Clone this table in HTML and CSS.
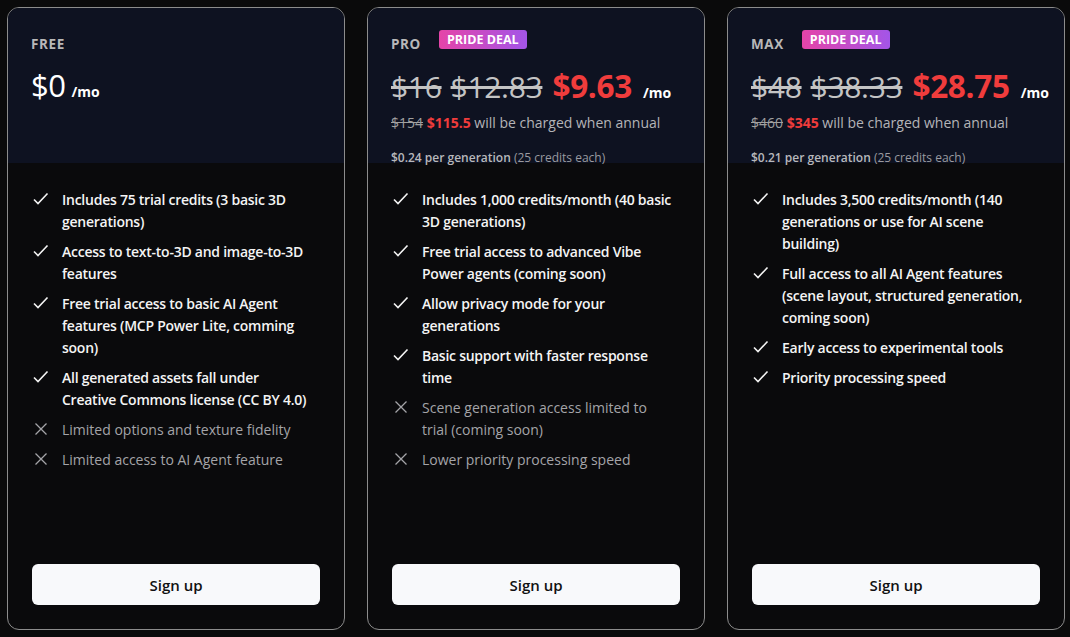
FILE: index.html
```html
<!DOCTYPE html>
<html lang="en">
<head>
    <meta charset="UTF-8">
    <meta name="viewport" content="width=device-width, initial-scale=1.0">
    <title>Pricing</title>
    <link rel="stylesheet" href="styles.css">
</head>
<body>

    <div class="plans">

        <!-- Free -->
        <div class="plan">
            <div class="plan-head">
                <div class="plan-title">
                    <span class="plan-name">FREE</span>
                </div>
                <div class="price-row free-row">
                    <span class="price-free">$0</span>
                    <span class="per">/mo</span>
                </div>
            </div>
            <div class="plan-body">
                <ul class="features">
                    <li class="yes"><svg class="icon" viewBox="0 0 16 16"><path d="M1 8.5l4 4 9.5-10"/></svg><span>Includes 75 trial credits (3 basic 3D generations)</span></li>
                    <li class="yes"><svg class="icon" viewBox="0 0 16 16"><path d="M1 8.5l4 4 9.5-10"/></svg><span>Access to text-to-3D and image-to-3D features</span></li>
                    <li class="yes"><svg class="icon" viewBox="0 0 16 16"><path d="M1 8.5l4 4 9.5-10"/></svg><span>Free trial access to basic AI Agent features (MCP Power Lite, comming soon)</span></li>
                    <li class="yes"><svg class="icon" viewBox="0 0 16 16"><path d="M1 8.5l4 4 9.5-10"/></svg><span>All generated assets fall under Creative Commons license (CC BY 4.0)</span></li>
                    <li class="no"><svg class="icon" viewBox="0 0 16 16"><path d="M2.5 2.5l11 11M13.5 2.5l-11 11"/></svg><span>Limited options and texture fidelity</span></li>
                    <li class="no"><svg class="icon" viewBox="0 0 16 16"><path d="M2.5 2.5l11 11M13.5 2.5l-11 11"/></svg><span>Limited access to AI Agent feature</span></li>
                </ul>
                <button class="signup">Sign up</button>
            </div>
        </div>

        <!-- Pro -->
        <div class="plan">
            <div class="plan-head">
                <div class="plan-title">
                    <span class="plan-name">PRO</span>
                    <span class="deal">PRIDE DEAL</span>
                </div>
                <div class="price-row">
                    <s class="old">$16</s>
                    <s class="old">$12.83</s>
                    <span class="now">$9.63</span>
                    <span class="per">/mo</span>
                </div>
                <div class="annual"><s>$154</s> <b>$115.5</b> will be charged when annual</div>
                <div class="per-gen"><b>$0.24 per generation</b> (25 credits each)</div>
            </div>
            <div class="plan-body">
                <ul class="features">
                    <li class="yes"><svg class="icon" viewBox="0 0 16 16"><path d="M1 8.5l4 4 9.5-10"/></svg><span>Includes 1,000 credits/month (40 basic 3D generations)</span></li>
                    <li class="yes"><svg class="icon" viewBox="0 0 16 16"><path d="M1 8.5l4 4 9.5-10"/></svg><span>Free trial access to advanced Vibe Power agents (coming soon)</span></li>
                    <li class="yes"><svg class="icon" viewBox="0 0 16 16"><path d="M1 8.5l4 4 9.5-10"/></svg><span>Allow privacy mode for your generations</span></li>
                    <li class="yes"><svg class="icon" viewBox="0 0 16 16"><path d="M1 8.5l4 4 9.5-10"/></svg><span>Basic support with faster response time</span></li>
                    <li class="no"><svg class="icon" viewBox="0 0 16 16"><path d="M2.5 2.5l11 11M13.5 2.5l-11 11"/></svg><span>Scene generation access limited to<br>trial (coming soon)</span></li>
                    <li class="no"><svg class="icon" viewBox="0 0 16 16"><path d="M2.5 2.5l11 11M13.5 2.5l-11 11"/></svg><span>Lower priority processing speed</span></li>
                </ul>
                <button class="signup">Sign up</button>
            </div>
        </div>

        <!-- Max -->
        <div class="plan">
            <div class="plan-head">
                <div class="plan-title">
                    <span class="plan-name">MAX</span>
                    <span class="deal">PRIDE DEAL</span>
                </div>
                <div class="price-row">
                    <s class="old">$48</s>
                    <s class="old">$38.33</s>
                    <span class="now">$28.75</span>
                    <span class="per">/mo</span>
                </div>
                <div class="annual"><s>$460</s> <b>$345</b> will be charged when annual</div>
                <div class="per-gen"><b>$0.21 per generation</b> (25 credits each)</div>
            </div>
            <div class="plan-body">
                <ul class="features">
                    <li class="yes"><svg class="icon" viewBox="0 0 16 16"><path d="M1 8.5l4 4 9.5-10"/></svg><span>Includes 3,500 credits/month (140 generations or use for AI scene building)</span></li>
                    <li class="yes"><svg class="icon" viewBox="0 0 16 16"><path d="M1 8.5l4 4 9.5-10"/></svg><span>Full access to all AI Agent features (scene layout, structured generation, coming soon)</span></li>
                    <li class="yes"><svg class="icon" viewBox="0 0 16 16"><path d="M1 8.5l4 4 9.5-10"/></svg><span>Early access to experimental tools</span></li>
                    <li class="yes"><svg class="icon" viewBox="0 0 16 16"><path d="M1 8.5l4 4 9.5-10"/></svg><span>Priority processing speed</span></li>
                </ul>
                <button class="signup">Sign up</button>
            </div>
        </div>

    </div>

</body>
</html>
```

FILE: styles.css
```css
body {
    margin: 0;
    background-color: #0a0a0b;
    font-family: "Open Sans", "Noto Sans", sans-serif;
    color: #f2f2f2;
}

.plans {
    display: flex;
    gap: 22px;
    padding: 7px;
    height: 637px;
    box-sizing: border-box;
}

.plan {
    width: 338px;
    flex: none;
    box-sizing: border-box;
    display: flex;
    flex-direction: column;
    border: 1px solid #8c8c8c;
    border-radius: 12px;
    overflow: hidden;
    background-color: #0a0a0c;
}

.plan-head {
    background-color: #0e1221;
    height: 155px;
    flex: none;
    padding: 21px 24px 0 23px;
    box-sizing: border-box;
}

.plan-title {
    display: flex;
    align-items: center;
    gap: 18px;
    height: 30px;
}

.plan-name {
    font-size: 13.5px;
    font-weight: 700;
    letter-spacing: 0.6px;
    color: #b8b8b8;
}

.deal {
    font-size: 12.5px;
    font-weight: 700;
    color: #fff;
    padding: 1px 8px;
    border-radius: 3px;
    background: linear-gradient(90deg, #e544a8, #a355e8);
    margin-top: -9px;
}

.price-row {
    display: flex;
    align-items: baseline;
    gap: 9px;
    height: 40px;
    margin-top: 5px;
}

.free-row {
    gap: 4px;
}

.price-free {
    font-size: 31px;
    font-weight: 400;
    color: #fff;
    letter-spacing: -0.5px;
}

.old {
    font-size: 30px;
    font-weight: 400;
    color: #c4c4c4;
    letter-spacing: -0.3px;
}

.now {
    font-size: 31.5px;
    font-weight: 700;
    color: #f03c3c;
    letter-spacing: -0.3px;
    margin-left: 1px;
}

.per {
    font-size: 14px;
    font-weight: 700;
    color: #fff;
    margin-left: 2px;
}

.annual {
    font-size: 14px;
    color: #b4b4b8;
    margin-top: 9px;
}

.annual s {
    color: #a0a0a0;
}

.annual b {
    color: #f03c3c;
}

.per-gen {
    font-size: 12px;
    color: #9a9aa0;
    margin-top: 17px;
}

.per-gen b {
    font-weight: 600;
    color: #b8b8bc;
}

.plan-body {
    flex: 1;
    display: flex;
    flex-direction: column;
    padding: 26px 24px 24px 24px;
}

.features {
    list-style: none;
    margin: 0;
    padding: 0 6px 0 0;
    flex: 1;
}

.features li {
    display: flex;
    gap: 13px;
    font-size: 14px;
    line-height: 22px;
    margin-bottom: 8px;
    padding-left: 1px;
}

.features li.yes {
    color: #f4f4f4;
    font-weight: 600;
    letter-spacing: -0.25px;
}

.features li.no {
    color: #a4a4a8;
}

.icon {
    flex: none;
    width: 16px;
    height: 16px;
    margin-top: 2px;
    fill: none;
    stroke-width: 1.6;
}

.yes .icon {
    stroke: #f4f4f4;
}

.no .icon {
    stroke: #a4a4a8;
    stroke-width: 1.3;
}

.signup {
    height: 41px;
    width: 100%;
    border: none;
    border-radius: 6px;
    background-color: #f8f9fb;
    color: #111;
    font-family: inherit;
    font-size: 15px;
    font-weight: 600;
    cursor: pointer;
}

.signup:hover {
    background-color: #e8e9ec;
}
```
